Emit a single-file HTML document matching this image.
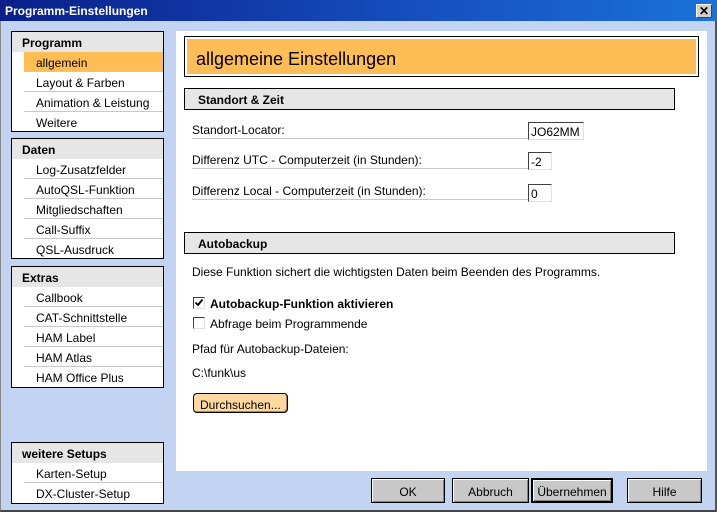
<!DOCTYPE html>
<html><head><meta charset="utf-8"><style>
*{margin:0;padding:0;box-sizing:border-box}
body{width:717px;height:512px;overflow:hidden;background:#c3d4f3;font:12px "Liberation Sans",Arial,sans-serif;color:#000;position:relative}
.a{position:absolute}
#frame{left:0;top:0;width:717px;height:512px;border:1px solid #888;border-top:0;border-right:2px solid #555;border-bottom:2px solid #444}
#title{left:0;top:0;width:717px;height:21px;background:linear-gradient(90deg,#0a1f8a 0%,#1650c0 60%,#1a72d8 100%);color:#fff;font-weight:bold;font-size:12px;padding:4px 0 0 5px}
#x{left:696px;top:4px;width:16px;height:14px;background:#d4d0c8;border:1px solid;border-color:#fff #404040 #404040 #fff;color:#000;font-size:12px;font-weight:bold;text-align:center;line-height:12px}
.box{left:11px;width:153px;border:1px solid #000;background:#fff}
.box .h{height:20px;background:#e6e6e6;font-weight:bold;padding:4px 0 0 10px}
.box .i{height:20px;margin-left:12px;border-bottom:1px solid #c8c8c8;padding:4px 0 0 12px}
.box .i:last-child{border-bottom:0}
.box .sel{background:#ffbe55}
#panel{left:176px;top:31px;width:531px;height:440px;background:#fff}
#hdr{left:184px;top:36px;width:515px;height:41px;border:1px solid #000;padding:2px}
#hdr div{background:#ffbe55;height:35px;font-size:18px;padding:10px 0 0 9px}
.sec{left:184px;width:491px;height:22px;border:1px solid #000;background:#e6e6e6;font-weight:bold;padding:4px 0 0 13px}
.row{left:192px;width:337px;height:17px;border-bottom:1px solid #c8c8c8;padding-top:1px}
.inp{left:528px;height:18px;border:1px solid;border-color:#404040 #e0e0e0 #e0e0e0 #404040;background:#fff;padding:2px 0 0 2px}
.cb{left:193px;width:12px;height:12px;border:1px solid;border-color:#404040 #e0e0e0 #e0e0e0 #404040;background:#fff}
.btn{top:478px;height:25px;background:#c8c8c8;border:1px solid #000;box-shadow:inset 1px 1px #fff,inset -1px -1px #808080;text-align:center;padding-top:6px}
</style></head><body>
<div class="a" id="frame"></div>
<div class="a" id="title">Programm-Einstellungen</div>
<div class="a" id="x">✕</div>

<div class="a box" style="top:31px;height:101px">
<div class="h">Programm</div>
<div class="i sel">allgemein</div><div class="i">Layout &amp; Farben</div><div class="i">Animation &amp; Leistung</div><div class="i">Weitere</div>
</div>
<div class="a box" style="top:138px;height:121px">
<div class="h">Daten</div>
<div class="i">Log-Zusatzfelder</div><div class="i">AutoQSL-Funktion</div><div class="i">Mitgliedschaften</div><div class="i">Call-Suffix</div><div class="i">QSL-Ausdruck</div>
</div>
<div class="a box" style="top:266px;height:122px">
<div class="h">Extras</div>
<div class="i">Callbook</div><div class="i">CAT-Schnittstelle</div><div class="i">HAM Label</div><div class="i">HAM Atlas</div><div class="i">HAM Office Plus</div>
</div>
<div class="a box" style="top:442px;height:62px">
<div class="h">weitere Setups</div>
<div class="i">Karten-Setup</div><div class="i">DX-Cluster-Setup</div>
</div>

<div class="a" id="panel"></div>
<div class="a" id="hdr"><div>allgemeine Einstellungen</div></div>
<div class="a sec" style="top:88px">Standort &amp; Zeit</div>
<div class="a row" style="top:122px">Standort-Locator:</div>
<div class="a inp" style="top:122px;width:56px">JO62MM</div>
<div class="a row" style="top:152px">Differenz UTC - Computerzeit (in Stunden):</div>
<div class="a inp" style="top:152px;width:24px">-2</div>
<div class="a row" style="top:183px">Differenz Local - Computerzeit (in Stunden):</div>
<div class="a inp" style="top:184px;width:24px">0</div>

<div class="a sec" style="top:232px">Autobackup</div>
<div class="a" style="left:192px;top:265px">Diese Funktion sichert die wichtigsten Daten beim Beenden des Programms.</div>
<div class="a cb" style="top:297px"><svg width="10" height="10" style="position:absolute;left:0;top:0"><path d="M1.5 4.5 L4 7 L8.5 1.5" stroke="#000" stroke-width="1.8" fill="none"/></svg></div>
<div class="a" style="left:210px;top:297px;font-weight:bold">Autobackup-Funktion aktivieren</div>
<div class="a cb" style="top:317px"></div>
<div class="a" style="left:210px;top:317px">Abfrage beim Programmende</div>
<div class="a" style="left:192px;top:342px">Pfad für Autobackup-Dateien:</div>
<div class="a" style="left:192px;top:366px">C:\funk\us</div>
<div class="a" style="left:193px;top:393px;width:95px;height:20px;background:#ffd8a0;border:1px solid #000;border-radius:4px;padding:4px 0 0 6px;box-shadow:inset -1px -1px #b08050">Durchsuchen...</div>

<div class="a btn" style="left:371px;width:74px">OK</div>
<div class="a btn" style="left:452px;width:77px">Abbruch</div>
<div class="a btn" style="left:531px;width:82px;border:2px solid #000;padding-top:5px">Übernehmen</div>
<div class="a btn" style="left:627px;width:75px">Hilfe</div>
</body></html>
